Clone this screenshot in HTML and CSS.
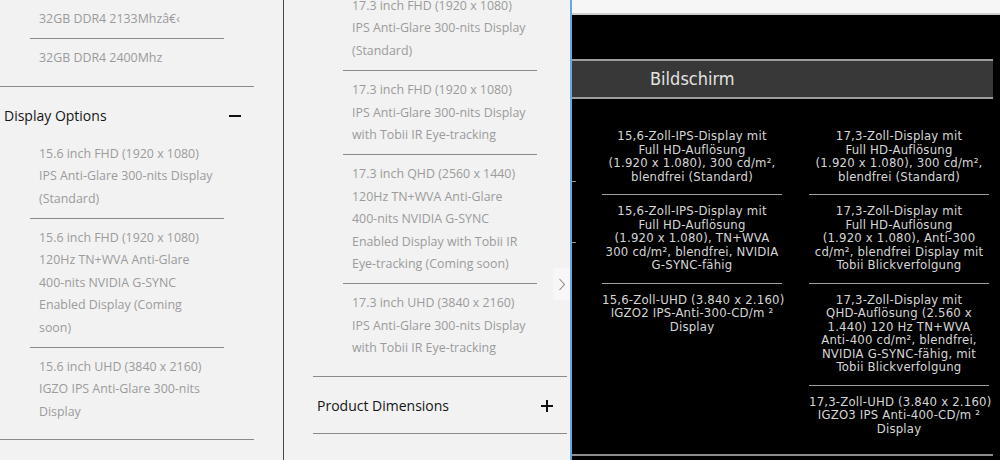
FILE: index.html
```html
<!DOCTYPE html>
<html lang="en">
<head>
<meta charset="utf-8">
<title>Display Options</title>
<link rel="stylesheet" href="styles.css">
</head>
<body>
<div class="page">
  <section class="panel panel-left">
    <div class="group">
      <ul class="opts">
        <li>32GB DDR4 2133Mhzâ€‹</li>
        <li>32GB DDR4 2400Mhz</li>
      </ul>
    </div>
    <div class="group">
      <div class="ghead"><span>Display Options</span>
        <svg class="toggle" width="12" height="12" viewBox="0 0 12 12"><path d="M0 6H12" stroke="#111" stroke-width="2"/></svg>
      </div>
      <ul class="opts">
        <li>15.6 inch FHD (1920 x 1080)<br>IPS Anti-Glare 300-nits Display<br>(Standard)</li>
        <li>15.6 inch FHD (1920 x 1080)<br>120Hz TN+WVA Anti-Glare<br>400-nits NVIDIA G-SYNC<br>Enabled Display (Coming<br>soon)</li>
        <li>15.6 inch UHD (3840 x 2160)<br>IGZO IPS Anti-Glare 300-nits<br>Display</li>
      </ul>
    </div>
  </section>

  <section class="panel panel-mid">
    <div class="group">
      <ul class="opts opts-scrolled">
        <li>17.3 inch FHD (1920 x 1080)<br>IPS Anti-Glare 300-nits Display<br>(Standard)</li>
        <li>17.3 inch FHD (1920 x 1080)<br>IPS Anti-Glare 300-nits Display<br>with Tobii IR Eye-tracking</li>
        <li>17.3 inch QHD (2560 x 1440)<br>120Hz TN+WVA Anti-Glare<br>400-nits NVIDIA G-SYNC<br>Enabled Display with Tobii IR<br>Eye-tracking (Coming soon)</li>
        <li>17.3 inch UHD (3840 x 2160)<br>IPS Anti-Glare 300-nits Display<br>with Tobii IR Eye-tracking</li>
      </ul>
    </div>
    <div class="group">
      <div class="ghead"><span>Product Dimensions</span>
        <svg class="toggle" width="12" height="12" viewBox="0 0 12 12"><path d="M0 6H12M6 0V12" stroke="#111" stroke-width="2"/></svg>
      </div>
    </div>
    <button class="next" aria-label="Next">
      <svg width="8" height="13" viewBox="0 0 8 13"><path d="M1.5 1L6.5 6.5L1.5 12" fill="none" stroke="#8a8a8a" stroke-width="1.1"/></svg>
    </button>
  </section>

  <section class="panel-right">
    <div class="topstrip"></div>
    <div class="dark">
      <div class="band">Bildschirm</div>
      <div class="spec">
        <div class="stub">
          <div class="stub-cell s1"></div>
          <div class="stub-cell s2"></div>
        </div>
        <div class="col">
          <div class="cell">15,6-Zoll-IPS-Display mit<br>Full HD-Auflösung<br>(1.920 x 1.080), 300 cd/m²,<br>blendfrei (Standard)</div>
          <div class="cell">15,6-Zoll-IPS-Display mit<br>Full HD-Auflösung<br>(1.920 x 1.080), TN+WVA<br>300 cd/m², blendfrei, NVIDIA<br>G-SYNC-fähig</div>
          <div class="cell last">15,6-Zoll-UHD (3.840 x 2.160)<br>IGZO2 IPS-Anti-300-CD/m ²<br>Display</div>
        </div>
        <div class="col">
          <div class="cell">17,3-Zoll-Display mit<br>Full HD-Auflösung<br>(1.920 x 1.080), 300 cd/m²,<br>blendfrei (Standard)</div>
          <div class="cell">17,3-Zoll-Display mit<br>Full HD-Auflösung<br>(1.920 x 1.080), Anti-300<br>cd/m², blendfrei Display mit<br>Tobii Blickverfolgung</div>
          <div class="cell">17,3-Zoll-Display mit<br>QHD-Auflösung (2.560 x<br>1.440) 120 Hz TN+WVA<br>Anti-400 cd/m², blendfrei,<br>NVIDIA G-SYNC-fähig, mit<br>Tobii Blickverfolgung</div>
          <div class="cell last">17,3-Zoll-UHD (3.840 x 2.160)<br>IGZO3 IPS Anti-400-CD/m ²<br>Display</div>
        </div>
      </div>
    </div>
  </section>
</div>
</body>
</html>
```
FILE: styles.css
```css
* { box-sizing: border-box; }
html, body { margin: 0; padding: 0; }
body {
  width: 1000px;
  height: 460px;
  overflow: hidden;
  background: #f2f2f2;
  font-family: "Open Sans", "Noto Sans", sans-serif;
}
.page {
  display: flex;
  height: 460px;
}
.panel {
  background: #f2f2f2;
  height: 460px;
  overflow: hidden;
}
.panel-left {
  width: 284px;
  border-right: 1px solid #4a4a4a;
}
.panel-mid {
  width: 286px;
  padding-left: 29px;
  position: relative;
}
.group {
  width: 254px;
  border-bottom: 1px solid #8a8a8a;
}
.opts {
  list-style: none;
  margin: 0 0 0 30px;
  padding: 0 0 8px;
  width: 194px;
}
.opts-scrolled { margin-top: -13px; }
.opts li {
  padding: 8px 9px;
  border-top: 1px solid #8a8a8a;
  font-size: 12.4px;
  line-height: 22.4px;
  color: #9b9b9b;
  white-space: nowrap;
}
.opts li:first-child { border-top: 0; }
.ghead {
  display: flex;
  align-items: center;
  justify-content: space-between;
  padding: 18px 13px 8px 4px;
  font-size: 14px;
  line-height: 22px;
  color: #151515;
}
.panel-mid .group + .group .ghead { padding-top: 18px; padding-bottom: 16px; }
.panel-mid .group + .group .toggle { margin-right: 1px; }
.toggle { display: block; }
.next {
  position: absolute;
  left: 269px;
  top: 268px;
  width: 17px;
  height: 32px;
  border: 0;
  padding: 0;
  background: #f7f7f7;
  display: flex;
  align-items: center;
  justify-content: center;
}
.next svg { display: block; }

.panel-right {
  flex: 1;
  border-left: 2px solid #6aa7e2;
  display: flex;
  flex-direction: column;
  height: 460px;
}
.topstrip {
  height: 15px;
  background: #f6f6f6;
  border-bottom: 2px solid #cdcdcd;
  flex: none;
}
.dark {
  flex: 1;
  background: #000;
  padding: 44px 7px 0 0;
  font-family: "DejaVu Sans Condensed", "DejaVu Sans", sans-serif;
}
.band {
  height: 40px;
  background: #383838;
  border-top: 2px solid #9d9d9d;
  border-bottom: 2px solid #9d9d9d;
  padding-left: 78px;
  font-size: 18px;
  line-height: 36px;
  color: #e2e2e2;
}
.spec {
  display: flex;
  margin-top: 21px;
  height: 336px;
  border-bottom: 2px solid #8c8c8c;
}
.stub {
  width: 4px;
  margin-right: 26px;
  flex: none;
}
.stub-cell { border-bottom: 1px solid #8a8a8a; }
.s1 { height: 62px; }
.s2 { height: 61px; }
.col {
  width: 180px;
  flex: none;
}
.col + .col { margin-left: 27px; }
.cell {
  padding: 9px 0 11px;
  border-bottom: 1px solid #a0a0a0;
  text-align: center;
  font-size: 13px;
  letter-spacing: 0.2px;
  line-height: 13.5px;
  color: #d6d6d6;
  white-space: nowrap;
}
.cell.last { border-bottom: 0; }
```
